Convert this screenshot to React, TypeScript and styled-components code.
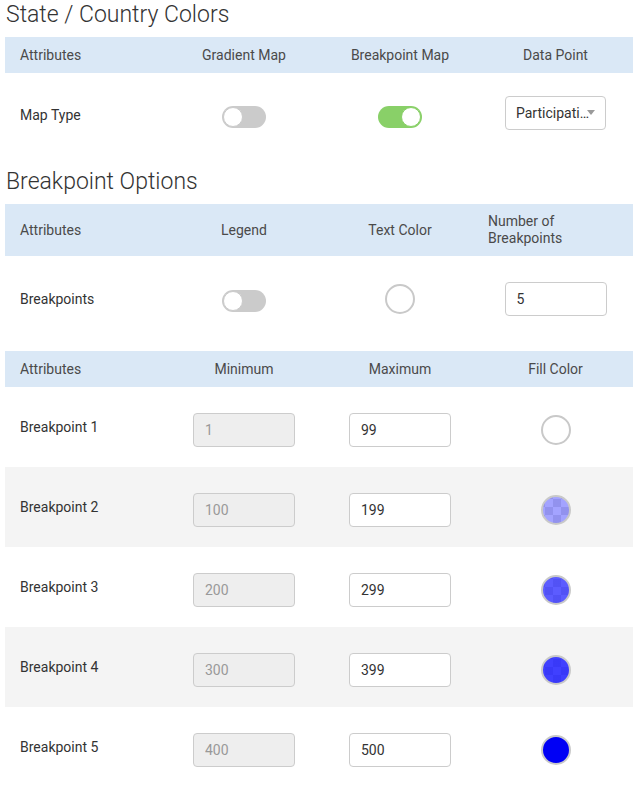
import React from 'react'
import styled, { createGlobalStyle } from 'styled-components'

const GlobalStyle = createGlobalStyle`
  body {
    margin: 0;
    background: #fff;
    font-family: Roboto, "Liberation Sans", sans-serif;
    color: #333;
  }
`

const Page = styled.div`
  width: 640px;
  padding: 0 7px 0 5px;
  box-sizing: border-box;
`

const Title = styled.h2<{ $top?: number }>`
  margin: ${p => p.$top ?? 0}px 0 0 1px;
  height: 30px;
  line-height: 30px;
  font-size: 23px;
  font-weight: 300;
  color: #333;
`

const Table = styled.div<{ $top?: number }>`
  margin-top: ${p => p.$top ?? 0}px;
  display: grid;
  grid-template-columns: 161px 156px 156px 155px;
`

const HeadCell = styled.div<{ $h: number; $left?: boolean; $pad?: number }>`
  height: ${p => p.$h}px;
  background: #dae8f6;
  display: flex;
  align-items: center;
  justify-content: ${p => (p.$left ? 'flex-start' : 'center')};
  padding-left: ${p => p.$pad ?? 0}px;
  font-size: 14px;
  line-height: 17px;
  color: #4a4a4a;
`

const Cell = styled.div<{ $h: number; $left?: boolean; $shade?: boolean; $shift?: number }>`
  height: ${p => p.$h}px;
  background: ${p => (p.$shade ? '#f4f4f4' : '#fff')};
  display: flex;
  align-items: center;
  justify-content: ${p => (p.$left ? 'flex-start' : 'center')};
  padding-left: ${p => (p.$left ? 15 : 0)}px;
  padding-top: ${p => p.$shift ?? 0}px;
  box-sizing: border-box;
  font-size: 14px;
  color: #333;
`

const Toggle = styled.div<{ $on?: boolean }>`
  width: 44px;
  height: 22px;
  border-radius: 11px;
  background: ${p => (p.$on ? '#89d068' : '#cbcbcb')};
  display: flex;
  justify-content: ${p => (p.$on ? 'flex-end' : 'flex-start')};
  align-items: center;
  padding: 0 1px;
  box-sizing: border-box;
  margin-top: 4px;
`

const Knob = styled.div<{ $on?: boolean }>`
  width: 20px;
  height: 20px;
  border-radius: 50%;
  background: #fff;
  box-sizing: border-box;
  border: 1px solid ${p => (p.$on ? '#89d068' : '#cbcbcb')};
`

const Select = styled.div`
  position: relative;
  width: 101px;
  height: 34px;
  border: 1px solid #ccc;
  border-radius: 4px;
  box-sizing: border-box;
  padding: 0 12px 0 10px;
  line-height: 32px;
  font-size: 14px;
  color: #333;
  white-space: nowrap;
  overflow: hidden;
  text-overflow: ellipsis;
  margin-top: -4px;
`

const Caret = styled.span`
  position: absolute;
  right: 10px;
  top: 13px;
  width: 0;
  height: 0;
  border-left: 4px solid transparent;
  border-right: 4px solid transparent;
  border-top: 5px solid #9a9a9a;
`

const Input = styled.input<{ $disabled?: boolean }>`
  width: 102px;
  height: 34px;
  box-sizing: border-box;
  border: 1px solid #ccc;
  border-radius: 4px;
  padding: 0 11px;
  font-family: Roboto, "Liberation Sans", sans-serif;
  font-size: 14px;
  color: ${p => (p.$disabled ? '#999' : '#333')};
  background: ${p => (p.$disabled ? '#eee' : '#fff')};
  outline: none;
`

const Swatch = styled.div<{ $color?: string }>`
  width: 30px;
  height: 30px;
  border-radius: 50%;
  box-sizing: border-box;
  border: 2px solid #c9c9c9;
  background: ${p =>
    p.$color
      ? `linear-gradient(${p.$color}, ${p.$color}), repeating-conic-gradient(#e4e4e4 0 25%, #fff 0 50%) 2px 2px / 16px 16px`
      : '#fff'};
`

const Spacer = styled.div<{ $h: number }>`
  grid-column: 1 / -1;
  height: ${p => p.$h}px;
`

const breakpoints = [
  { min: '1', max: '99', color: '' },
  { min: '100', max: '199', color: 'rgba(0,0,255,0.36)' },
  { min: '200', max: '299', color: 'rgba(0,0,255,0.64)' },
  { min: '300', max: '399', color: 'rgba(0,0,255,0.75)' },
  { min: '400', max: '500', color: 'rgba(0,0,245,1)' }
]

function App() {
  const renderBreakpoint = (b: typeof breakpoints[number], i: number) => {
    const shade = i % 2 === 1
    return (
      <React.Fragment key={i}>
        <Cell $h={80} $left $shade={shade}>Breakpoint {i + 1}</Cell>
        <Cell $h={80} $shade={shade} $shift={6}>
          <Input $disabled readOnly value={b.min} />
        </Cell>
        <Cell $h={80} $shade={shade} $shift={6}>
          <Input readOnly value={b.max} />
        </Cell>
        <Cell $h={80} $shade={shade} $shift={6}>
          <Swatch $color={b.color || undefined} />
        </Cell>
      </React.Fragment>
    )
  }

  return (
    <Page>
      <GlobalStyle />
      <Title>State / Country Colors</Title>
      <Table $top={7}>
        <HeadCell $h={36} $left $pad={15}>Attributes</HeadCell>
        <HeadCell $h={36}>Gradient Map</HeadCell>
        <HeadCell $h={36}>Breakpoint Map</HeadCell>
        <HeadCell $h={36}>Data Point</HeadCell>
        <Cell $h={84} $left>Map Type</Cell>
        <Cell $h={84}>
          <Toggle><Knob /></Toggle>
        </Cell>
        <Cell $h={84}>
          <Toggle $on><Knob $on /></Toggle>
        </Cell>
        <Cell $h={84}>
          <Select>
            Participation
            <Caret />
          </Select>
        </Cell>
      </Table>

      <Title $top={10}>Breakpoint Options</Title>
      <Table $top={7}>
        <HeadCell $h={52} $left $pad={15}>Attributes</HeadCell>
        <HeadCell $h={52}>Legend</HeadCell>
        <HeadCell $h={52}>Text Color</HeadCell>
        <HeadCell $h={52} $left $pad={10}>Number of<br />Breakpoints</HeadCell>
        <Cell $h={86} $left>Breakpoints</Cell>
        <Cell $h={86}>
          <Toggle><Knob /></Toggle>
        </Cell>
        <Cell $h={86}>
          <Swatch />
        </Cell>
        <Cell $h={86}>
          <Input readOnly value="5" />
        </Cell>
        <Spacer $h={9} />
        <HeadCell $h={36} $left $pad={15}>Attributes</HeadCell>
        <HeadCell $h={36}>Minimum</HeadCell>
        <HeadCell $h={36}>Maximum</HeadCell>
        <HeadCell $h={36}>Fill Color</HeadCell>
        {breakpoints.map((b, i) => renderBreakpoint(b, i))}
      </Table>
    </Page>
  )
}

export default App
